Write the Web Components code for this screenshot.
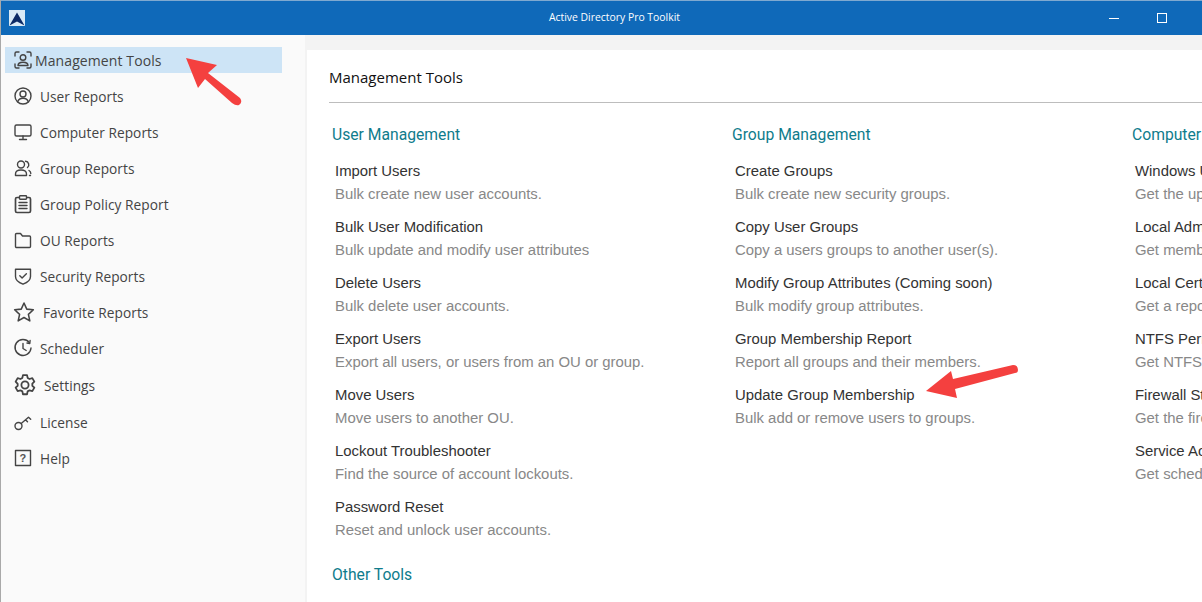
<!DOCTYPE html>
<html>
<head>
<meta charset="utf-8">
<title>Active Directory Pro Toolkit</title>
<style>
html, body { margin: 0; height: 100%; overflow: hidden; background: #f3f3f3; }
body { position: relative; width: 1202px; height: 602px; }
</style>
</head>
<body>
<app-shell>
  <title-bar slot="top">Active Directory Pro Toolkit</title-bar>
  <side-nav slot="side">
    <nav-item active gap="2" icon="manage">Management Tools</nav-item>
    <nav-item icon="user">User Reports</nav-item>
    <nav-item icon="monitor">Computer Reports</nav-item>
    <nav-item icon="group">Group Reports</nav-item>
    <nav-item icon="clipboard">Group Policy Report</nav-item>
    <nav-item icon="folder">OU Reports</nav-item>
    <nav-item icon="shield">Security Reports</nav-item>
    <nav-item icon="star" size="22" gap="8">Favorite Reports</nav-item>
    <nav-item icon="clock" extra="1">Scheduler</nav-item>
    <nav-item icon="gear" size="24" gap="7" extra="1">Settings</nav-item>
    <nav-item icon="key">License</nav-item>
    <nav-item icon="help">Help</nav-item>
  </side-nav>
  <tools-panel slot="main" heading="Management Tools">
    <tool-column>
      <tool-group heading="User Management">
        <tool-item name="Import Users">Bulk create new user accounts.</tool-item>
        <tool-item name="Bulk User Modification">Bulk update and modify user attributes</tool-item>
        <tool-item name="Delete Users">Bulk delete user accounts.</tool-item>
        <tool-item name="Export Users">Export all users, or users from an OU or group.</tool-item>
        <tool-item name="Move Users">Move users to another OU.</tool-item>
        <tool-item name="Lockout Troubleshooter">Find the source of account lockouts.</tool-item>
        <tool-item name="Password Reset">Reset and unlock user accounts.</tool-item>
      </tool-group>
      <tool-group heading="Other Tools"></tool-group>
    </tool-column>
    <tool-column>
      <tool-group heading="Group Management">
        <tool-item name="Create Groups">Bulk create new security groups.</tool-item>
        <tool-item name="Copy User Groups">Copy a users groups to another user(s).</tool-item>
        <tool-item name="Modify Group Attributes (Coming soon)">Bulk modify group attributes.</tool-item>
        <tool-item name="Group Membership Report">Report all groups and their members.</tool-item>
        <tool-item name="Update Group Membership">Bulk add or remove users to groups.</tool-item>
      </tool-group>
    </tool-column>
    <tool-column>
      <tool-group heading="Computer Management">
        <tool-item name="Windows Updates">Get the update status of computers.</tool-item>
        <tool-item name="Local Admins">Get members of the local admin group.</tool-item>
        <tool-item name="Local Certificates">Get a report of local certificates.</tool-item>
        <tool-item name="NTFS Permissions">Get NTFS permissions of folders.</tool-item>
        <tool-item name="Firewall Status">Get the firewall status of computers.</tool-item>
        <tool-item name="Service Accounts">Get scheduled tasks and services.</tool-item>
      </tool-group>
    </tool-column>
  </tools-panel>
</app-shell>

<red-arrow x="176" y="50" w="74" h="62" d="M10 8 L41 15 L32 23 L64 48 Q67 52 63 55 Q60 56 56 53 L29 29 L22 38 Z"></red-arrow>
<red-arrow x="918" y="358" w="106" h="46" d="M8 33 L33 13 L35 21 L95 7 Q100 7 100 12 Q100 15 97 15 L37 31 L39 40 Z"></red-arrow>

<script>
const ICONS = {
  manage: '<path d="M2 6V3.500A1.500 1.500 0 0 1 3.500 2H6M14 2h2.500A1.500 1.500 0 0 1 18 3.500V6M18 14v2.500a1.500 1.500 0 0 1-1.500 1.500H14M6 18H3.500A1.500 1.500 0 0 1 2 16.500V14"/><circle cx="10" cy="7.500" r="2.800"/><path d="M5 15.500c0-2.500 2-3.300 5-3.300s5 .8 5 3.300z"/>',
  user: '<circle cx="10" cy="10" r="8"/><circle cx="10" cy="8" r="3"/><path d="M4.700 15.800c.8-2.500 2.800-3.500 5.300-3.500s4.500 1 5.300 3.500"/>',
  monitor: '<rect x="2" y="3" width="16" height="11" rx="1.500"/><path d="M10 14v3M6.500 17.500h7"/>',
  group: '<circle cx="8" cy="6.500" r="3.500"/><path d="M2.500 17.500v-1.500c0-2.600 2.500-4 5.500-4s5.500 1.400 5.500 4v1.500z"/><path d="M12.500 3.300a3.500 3.500 0 0 1 2 6.200M16 12.500c1.200.8 1.800 1.800 1.800 3M16.500 17.500h1"/>',
  clipboard: '<rect x="2.500" y="3.500" width="15" height="15" rx="1.500" stroke-width="1.700"/><rect x="6.500" y="1.800" width="7" height="3.400" rx=".6" fill="#fafafa"/><path d="M6 8.500h8M6 11.500h8M6 14.500h8"/>',
  folder: '<path d="M2.500 16.500v-12a1 1 0 0 1 1-1h4l2 2.500h7a1 1 0 0 1 1 1v9.500a1 1 0 0 1-1 1h-13a1 1 0 0 1-1-1z"/>',
  shield: '<path d="M2.500 3.200h15v7.300c0 3.700-3.600 6.200-7.500 7.700-3.900-1.500-7.500-4-7.500-7.700z"/><path d="M6.800 9.800l2.300 2.300 4.300-4.300"/>',
  star: '<path d="M10 1.800l2.500 5.600 6 .6-4.500 4.100 1.300 6L10 15l-5.300 3.100 1.300-6L1.500 8l6-.6z"/>',
  clock: '<path d="M16.300 4.500A8 8 0 1 0 18 10"/><path d="M10 5.500V10.500l3.200 2M14 5l2.800.5.3-3"/>',
  gear: '<path d="M8.300 1.800h3.400l.5 2.300 1.600.9 2.300-.7 1.700 2.900-1.700 1.600v1.800l1.700 1.600-1.700 2.900-2.300-.7-1.600.9-.5 2.400H8.300l-.5-2.400-1.600-.9-2.300.7-1.700-2.900 1.700-1.600V9.100L2.200 7.200 3.900 4.300l2.300.7 1.600-.9z" stroke-width="1.500"/><circle cx="10" cy="10" r="3" stroke-width="1.500"/>',
  key: '<circle cx="5.500" cy="14" r="3.500"/><path d="M8.200 11.500L15.500 5.200l2.200 2M12.500 7.800l2 2"/>',
  help: '<rect x="2.500" y="2.500" width="15" height="15"/><text x="10" y="14" text-anchor="middle" font-size="11" font-weight="700" font-family="Liberation Sans" fill="#555" stroke="none">?</text>'
};

class AppShell extends HTMLElement {
  constructor() {
    super();
    this.attachShadow({mode: 'open'});
    this.shadowRoot.innerHTML = `
    <style>
      :host { display: flex; flex-direction: column; width: 1202px; height: 602px; box-sizing: border-box; border-left: 1px solid #a9a9a9; }
      .body { display: flex; flex: 1; min-height: 0; }
    </style>
    <slot name="top"></slot>
    <div class="body">
      <slot name="side"></slot>
      <slot name="main"></slot>
    </div>`;
  }
}
customElements.define('app-shell', AppShell);

class TitleBar extends HTMLElement {
  constructor() {
    super();
    this.attachShadow({mode: 'open'});
    this.shadowRoot.innerHTML = `
    <style>
      :host { display: grid; grid-template-columns: 200px 1fr 200px; align-items: center; height: 34px; border-top: 1px solid #7fa9d0; background: #0f69b9; color: #fff; font: 10.400px "Open Sans", sans-serif; }
      .logo { display: flex; padding-left: 8px; }
      .title { text-align: center; padding: 0 0 3px 26px; }
      .btns { display: flex; justify-content: flex-end; align-items: center; gap: 38px; padding-right: 35px; }
      .min { width: 10px; height: 1px; background: #fff; margin-top: 1px; }
      .max { width: 8px; height: 8px; border: 1px solid #fff; }
    </style>
    <div class="logo">
      <svg width="16" height="16" viewBox="0 0 16 16"><rect width="16" height="16" fill="#d9eaf7"/><path d="M8 2.500L15.500 15.500 8 11.500 .5 15.500z" fill="#0c2a66"/></svg>
    </div>
    <div class="title"><slot></slot></div>
    <div class="btns"><div class="min"></div><div class="max"></div></div>`;
  }
}
customElements.define('title-bar', TitleBar);

class SideNav extends HTMLElement {
  constructor() {
    super();
    this.attachShadow({mode: 'open'});
    this.shadowRoot.innerHTML = `
    <style>
      :host { display: flex; flex-direction: column; width: 304px; box-sizing: border-box; padding: 12px 23px 0 4px; background: #fafafa; flex: none; }
    </style>
    <slot></slot>`;
  }
}
customElements.define('side-nav', SideNav);

class NavItem extends HTMLElement {
  constructor() {
    super();
    this.attachShadow({mode: 'open'});
  }
  connectedCallback() {
    const icon = ICONS[this.getAttribute('icon')] || '';
    const gap = this.getAttribute('gap') ?? '7';
    const extra = this.getAttribute('extra') ?? '0';
    const size = this.getAttribute('size') ?? '20';
    const active = this.hasAttribute('active');
    this.shadowRoot.innerHTML = `
    <style>
      :host { display: flex; align-items: center; height: 26px; margin-bottom: ${10 + +extra}px; padding-left: 8px; gap: ${gap}px; color: #444; font: ${active ? '14px' : '13.700px'} "Open Sans", sans-serif; letter-spacing: ${active ? '.1px' : '.05px'}; background: ${active ? '#cde4f6' : 'transparent'}; }
      svg { width: ${size}px; height: ${size}px; flex: none; fill: none; stroke: #444; stroke-width: 1.400; stroke-linecap: round; stroke-linejoin: round; }
    </style>
    <svg viewBox="0 0 20 20">${icon}</svg><slot></slot>`;
  }
}
customElements.define('nav-item', NavItem);

class ToolsPanel extends HTMLElement {
  constructor() {
    super();
    this.attachShadow({mode: 'open'});
  }
  connectedCallback() {
    this.shadowRoot.innerHTML = `
    <style>
      :host { display: block; flex: 1; min-width: 0; margin: 15px 0 0 2px; background: #fff; overflow: hidden; padding: 0 0 0 22px; }
      h1 { margin: 0; height: 52px; font: 400 15px/54px "Open Sans", sans-serif; color: #111; border-bottom: 1px solid #bdbdbd; }
      .cols { display: grid; grid-template-columns: repeat(3, 400px); padding: 20px 0 0 3px; }
    </style>
    <h1>${this.getAttribute('heading')}</h1>
    <div class="cols"><slot></slot></div>`;
  }
}
customElements.define('tools-panel', ToolsPanel);

class ToolColumn extends HTMLElement {
  constructor() {
    super();
    this.attachShadow({mode: 'open'});
    this.shadowRoot.innerHTML = `<style>:host { display: block; min-width: 0; }</style><slot></slot>`;
  }
}
customElements.define('tool-column', ToolColumn);

class ToolGroup extends HTMLElement {
  constructor() {
    super();
    this.attachShadow({mode: 'open'});
  }
  connectedCallback() {
    this.shadowRoot.innerHTML = `
    <style>
      :host { display: block; white-space: nowrap; margin-bottom: 11px; }
      h2 { margin: 0 0 13px; font: 400 15.700px/24px Roboto, sans-serif; color: #0f7c8c; }
      .list { padding-left: 3px; }
    </style>
    <h2>${this.getAttribute('heading')}</h2>
    <div class="list"><slot></slot></div>`;
  }
}
customElements.define('tool-group', ToolGroup);

class ToolItem extends HTMLElement {
  constructor() {
    super();
    this.attachShadow({mode: 'open'});
  }
  connectedCallback() {
    this.shadowRoot.innerHTML = `
    <style>
      :host { display: block; height: 56px; font-family: "Liberation Sans", Arial, sans-serif; font-size: 14.900px; }
      .name { color: #333; line-height: 23px; height: 23px; }
      .desc { color: #888; line-height: 23px; height: 23px; }
    </style>
    <div class="name">${this.getAttribute('name')}</div>
    <div class="desc"><slot></slot></div>`;
  }
}
customElements.define('tool-item', ToolItem);

// the two red annotation arrows sit on top of the app
class RedArrow extends HTMLElement {
  constructor() {
    super();
    this.attachShadow({mode: 'open'});
  }
  connectedCallback() {
    const g = n => this.getAttribute(n);
    this.shadowRoot.innerHTML = `
    <style>:host { position: absolute; left: ${g('x')}px; top: ${g('y')}px; width: ${g('w')}px; height: ${g('h')}px; display: block; }</style>
    <svg width="${g('w')}" height="${g('h')}" viewBox="0 0 ${g('w')} ${g('h')}"><path d="${g('d')}" fill="#f4403f"/></svg>`;
  }
}
customElements.define('red-arrow', RedArrow);
</script>
</body>
</html>
